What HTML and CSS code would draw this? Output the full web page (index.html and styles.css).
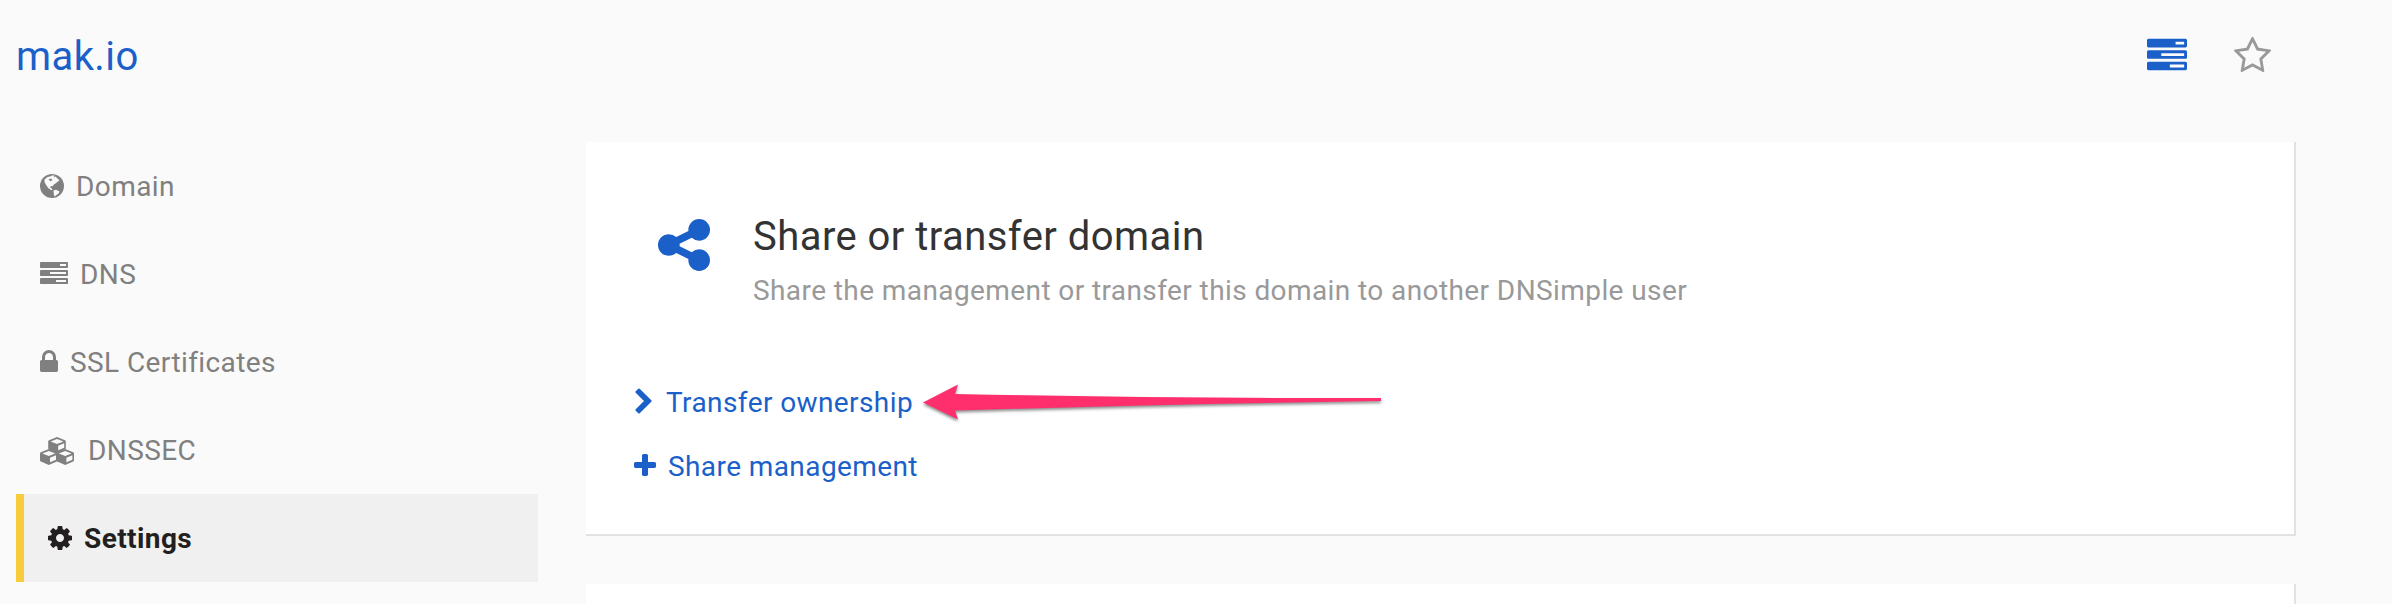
FILE: index.html
```html
<!DOCTYPE html>
<html lang="en">
<head>
<meta charset="utf-8">
<title>mak.io</title>
<link rel="stylesheet" href="styles.css">
</head>
<body>
<header class="top">
  <a class="domain">mak.io</a>
  <div class="actions">
    <svg class="act-tasks" viewBox="0 0 1792 1792"><path fill-rule="evenodd" d="M1024 1408h640v-128h-640v128zm-384-512h1024v-128h-1024v128zm640-512h384v-128h-384v128zm512 832v256q0 26-19 45t-45 19h-1664q-26 0-45-19t-19-45v-256q0-26 19-45t45-19h1664q26 0 45 19t19 45zm0-512v256q0 26-19 45t-45 19h-1664q-26 0-45-19t-19-45v-256q0-26 19-45t45-19h1664q26 0 45 19t19 45zm0-512v256q0 26-19 45t-45 19h-1664q-26 0-45-19t-19-45v-256q0-26 19-45t45-19h1664q26 0 45 19t19 45z"/></svg>
    <svg class="act-star" viewBox="64 0 1664 1792"><path d="M1201 1004l306-297-422-62-189-382-189 382-422 62 306 297-73 421 378-199 377 199zm527-357q0 22-26 48l-363 354 86 500q1 7 1 20 0 50-41 50-19 0-40-12l-449-236-449 236q-22 12-40 12-21 0-31.500-14.500t-10.500-35.500q0-6 2-20l86-500-364-354q-25-27-25-48 0-37 56-46l502-73 225-455q19-41 49-41t49 41l225 455 502 73q56 9 56 46z"/></svg>
  </div>
</header>
<div class="columns">
  <nav class="side">
    <a class="item"><svg class="i-globe" viewBox="0 0 24 28"><circle cx="12" cy="14" r="12"/><path class="land" d="M4.500 7.500L7.500 5L11 4.200L12.500 3.300L14.500 3.800L13.500 5.500L15.500 4.600L17.500 6.500L19.500 8.500L17.500 9.800L15.800 11.200L13.800 12.500L12.600 14.200L10.600 14L10.400 16L12 16.400L12.300 18.200L10.500 17.800L8 15.800L6 12.800L4.500 10Z"/><path class="land" d="M13.500 18.500L16 17.800L19.500 19.600L18.600 21.500L16.500 23L14.500 24.500L13.800 22Z"/><path d="M8.500 7.500L11 6.500L12.500 8L10.500 9.200Z"/></svg><span>Domain</span></a>
    <a class="item"><svg class="i-tasks" viewBox="0 0 1792 1792"><path fill-rule="evenodd" d="M1024 1408h640v-128h-640v128zm-384-512h1024v-128h-1024v128zm640-512h384v-128h-384v128zm512 832v256q0 26-19 45t-45 19h-1664q-26 0-45-19t-19-45v-256q0-26 19-45t45-19h1664q26 0 45 19t19 45zm0-512v256q0 26-19 45t-45 19h-1664q-26 0-45-19t-19-45v-256q0-26 19-45t45-19h1664q26 0 45 19t19 45zm0-512v256q0 26-19 45t-45 19h-1664q-26 0-45-19t-19-45v-256q0-26 19-45t45-19h1664q26 0 45 19t19 45z"/></svg><span>DNS</span></a>
    <a class="item"><svg class="i-lock" viewBox="320 0 1152 1792"><path d="M640 768h512v-192q0-106-75-181t-181-75-181 75-75 181v192zm832 96v576q0 40-28 68t-68 28h-960q-40 0-68-28t-28-68v-576q0-40 28-68t68-28h32v-192q0-184 132-316t316-132 316 132 132 316v192h32q40 0 68 28t28 68z"/></svg><span>SSL Certificates</span></a>
    <a class="item"><svg class="i-cubes" viewBox="0 0 34 28"><defs><path id="cube" fill-rule="evenodd" d="M8.800 0L16.800 3.200Q17.600 3.600 17.600 4.500V11.300Q17.600 12.200 16.800 12.600L8.800 16L.8 12.600Q0 12.200 0 11.300V4.500Q0 3.600 .8 3.200ZM2.400 4.400L8.800 7L15.200 4.400L8.800 1.900ZM10 8.800V13.200L16 10.700V6.200Z"/></defs><use href="#cube" x="8.200"/><use href="#cube" y="12"/><use href="#cube" x="16.400" y="12"/></svg><span>DNSSEC</span></a>
    <a class="item active"><svg class="i-cog" viewBox="128 0 1536 1792"><path d="M1152 896q0-106-75-181t-181-75-181 75-75 181 75 181 181 75 181-75 75-181zm512-109v222q0 12-8 23t-20 13l-185 28q-19 54-39 91 35 50 107 138 10 12 10 25t-9 23q-27 37-99 108t-94 71q-12 0-26-9l-138-108q-44 23-91 38-16 136-29 186-7 28-36 28h-222q-14 0-24.500-8.500t-11.500-21.500l-28-184q-49-16-90-37l-141 107q-10 9-25 9-14 0-25-11-126-114-165-168-7-10-7-23 0-12 8-23 15-21 51-66.500t54-70.500q-27-50-41-99l-183-27q-13-2-21-12.500t-8-23.500v-222q0-12 8-23t19-13l186-28q14-46 39-92-40-57-107-138-10-12-10-24 0-10 9-23 26-36 98.500-107.500t94.500-71.500q13 0 26 10l138 107q44-23 91-38 16-136 29-186 7-28 36-28h222q14 0 24.500 8.500t11.500 21.500l28 184q49 16 90 37l142-107q9-9 24-9 13 0 25 10 129 119 165 170 7 8 7 22 0 12-8 23-15 21-51 66.500t-54 70.500q26 50 41 98l183 28q13 2 21 12.500t8 23.500z"/></svg><span>Settings</span></a>
  </nav>
  <main class="cards">
    <section class="card">
      <div class="card-head">
        <svg class="i-share" viewBox="128 128 1536 1536"><path d="M1344 1024q133 0 226.500 93.500t93.500 226.500-93.500 226.500-226.500 93.500-226.500-93.500-93.500-226.500q0-12 2-34l-360-180q-92 86-218 86-133 0-226.500-93.500t-93.500-226.500 93.500-226.500 226.500-93.500q126 0 218 86l360-180q-2-22-2-34 0-133 93.500-226.500t226.500-93.500 226.500 93.500 93.500 226.500-93.500 226.500-226.500 93.500q-126 0-218-86l-360 180q2 22 2 34t-2 34l360 180q92-86 218-86z"/></svg>
        <div>
          <h2 class="title">Share or transfer domain</h2>
          <p class="desc">Share the management or transfer this domain to another DNSimple user</p>
        </div>
      </div>
      <div class="links">
        <a class="link"><svg class="i-chev" viewBox="346 0 1036 1792"><path d="M1363 877l-742 742q-19 19-45 19t-45-19l-166-166q-19-19-19-45t19-45l531-531-531-531q-19-19-19-45t19-45l166-166q19-19 45-19t45 19l742 742q19 19 19 45t-19 45z"/></svg><span>Transfer ownership</span>
          <svg class="arrow" viewBox="0 0 470 50"><path d="M4 22.500L39 4.500L36 14Q240 18.500 462 18V21Q240 24.500 36 30.500L39 39.500Z"/></svg></a>
        <a class="link"><svg class="i-plus" viewBox="192 0 1408 1792"><path d="M1600 736v192q0 40-28 68t-68 28h-416v416q0 40-28 68t-68 28h-192q-40 0-68-28t-28-68v-416h-416q-40 0-68-28t-28-68v-192q0-40 28-68t68-28h416v-416q0-40 28-68t68-28h192q40 0 68 28t28 68v416h416q40 0 68 28t28 68z"/></svg><span>Share management</span></a>
      </div>
    </section>
    <section class="card next"></section>
  </main>
</div>
</body>
</html>
```

FILE: styles.css
```css
* { box-sizing: border-box; }
body {
  margin: 0;
  background: #fafafa;
  font-family: Roboto, "Liberation Sans", sans-serif;
  font-size: 28px;
  line-height: 44px;
  letter-spacing: .41px;
}
svg { display: block; flex: none; fill: currentColor; }
.top {
  display: flex;
  justify-content: space-between;
  height: 142px;
  padding: 27px 121px 0 16px;
  color: #1b5fc9;
}
.domain { font-size: 40px; line-height: 60px; }
.actions { display: flex; }
.act-tasks { width: 40px; height: 40px; margin-top: 8.500px; }
.act-star { width: 37px; height: 40px; margin: 8.700px 0 0 47px; color: #999; }
.columns { display: flex; }
.side { width: 522px; margin-left: 16px; }
.item {
  display: flex;
  align-items: center;
  height: 88px;
  padding-left: 24px;
  color: #808080;
}
.item span, .link span { padding-top: 2px; }
.active {
  border-left: 8px solid #f8cb3a;
  background: #f0f0f0;
  color: #231f20;
  font-weight: 700;
}
.i-globe { width: 24px; height: 28px; margin-right: 12px; }
.land { fill: #fafafa; }
.i-tasks { width: 28px; height: 28px; margin-right: 12px; }
.i-lock { width: 18px; height: 28px; margin-right: 12px; }
.i-cubes { width: 34px; height: 28px; margin: 2px 14px 0 0; }
.i-cog { width: 24px; height: 28px; margin-right: 12px; }
.cards { width: 1710px; margin-left: 48px; }
.card {
  height: 394px;
  margin-bottom: 48px;
  padding-top: 65px;
  background: #fff;
  border: solid #e2e2e2;
  border-width: 0 2px 2px 0;
}
.next { height: 20px; margin: 0; padding: 0; border-bottom: 0; }
.card-head { display: flex; padding-left: 72px; }
.i-share { width: 52px; height: 52px; margin: 12px 43px 0 0; color: #1b5fc9; }
.title { margin: 0; font-size: 40px; line-height: 60px; font-weight: 400; color: #333; letter-spacing: .45px; }
.desc { margin: 2px 0 0; color: #999; }
.links { padding: 57px 0 0 48px; color: #1b5fc9; }
.link { position: relative; display: flex; align-items: center; height: 64px; }
.i-chev { width: 17px; height: 28px; margin: 0 14px 0 1px; }
.i-plus { width: 22px; height: 28px; margin-right: 12px; }
.arrow {
  position: absolute;
  left: 285px;
  top: 10px;
  width: 470px;
  height: 50px;
  color: #ff2f6e;
  filter: drop-shadow(0 2px 1.500px rgba(0,0,0,.45));
}
```
